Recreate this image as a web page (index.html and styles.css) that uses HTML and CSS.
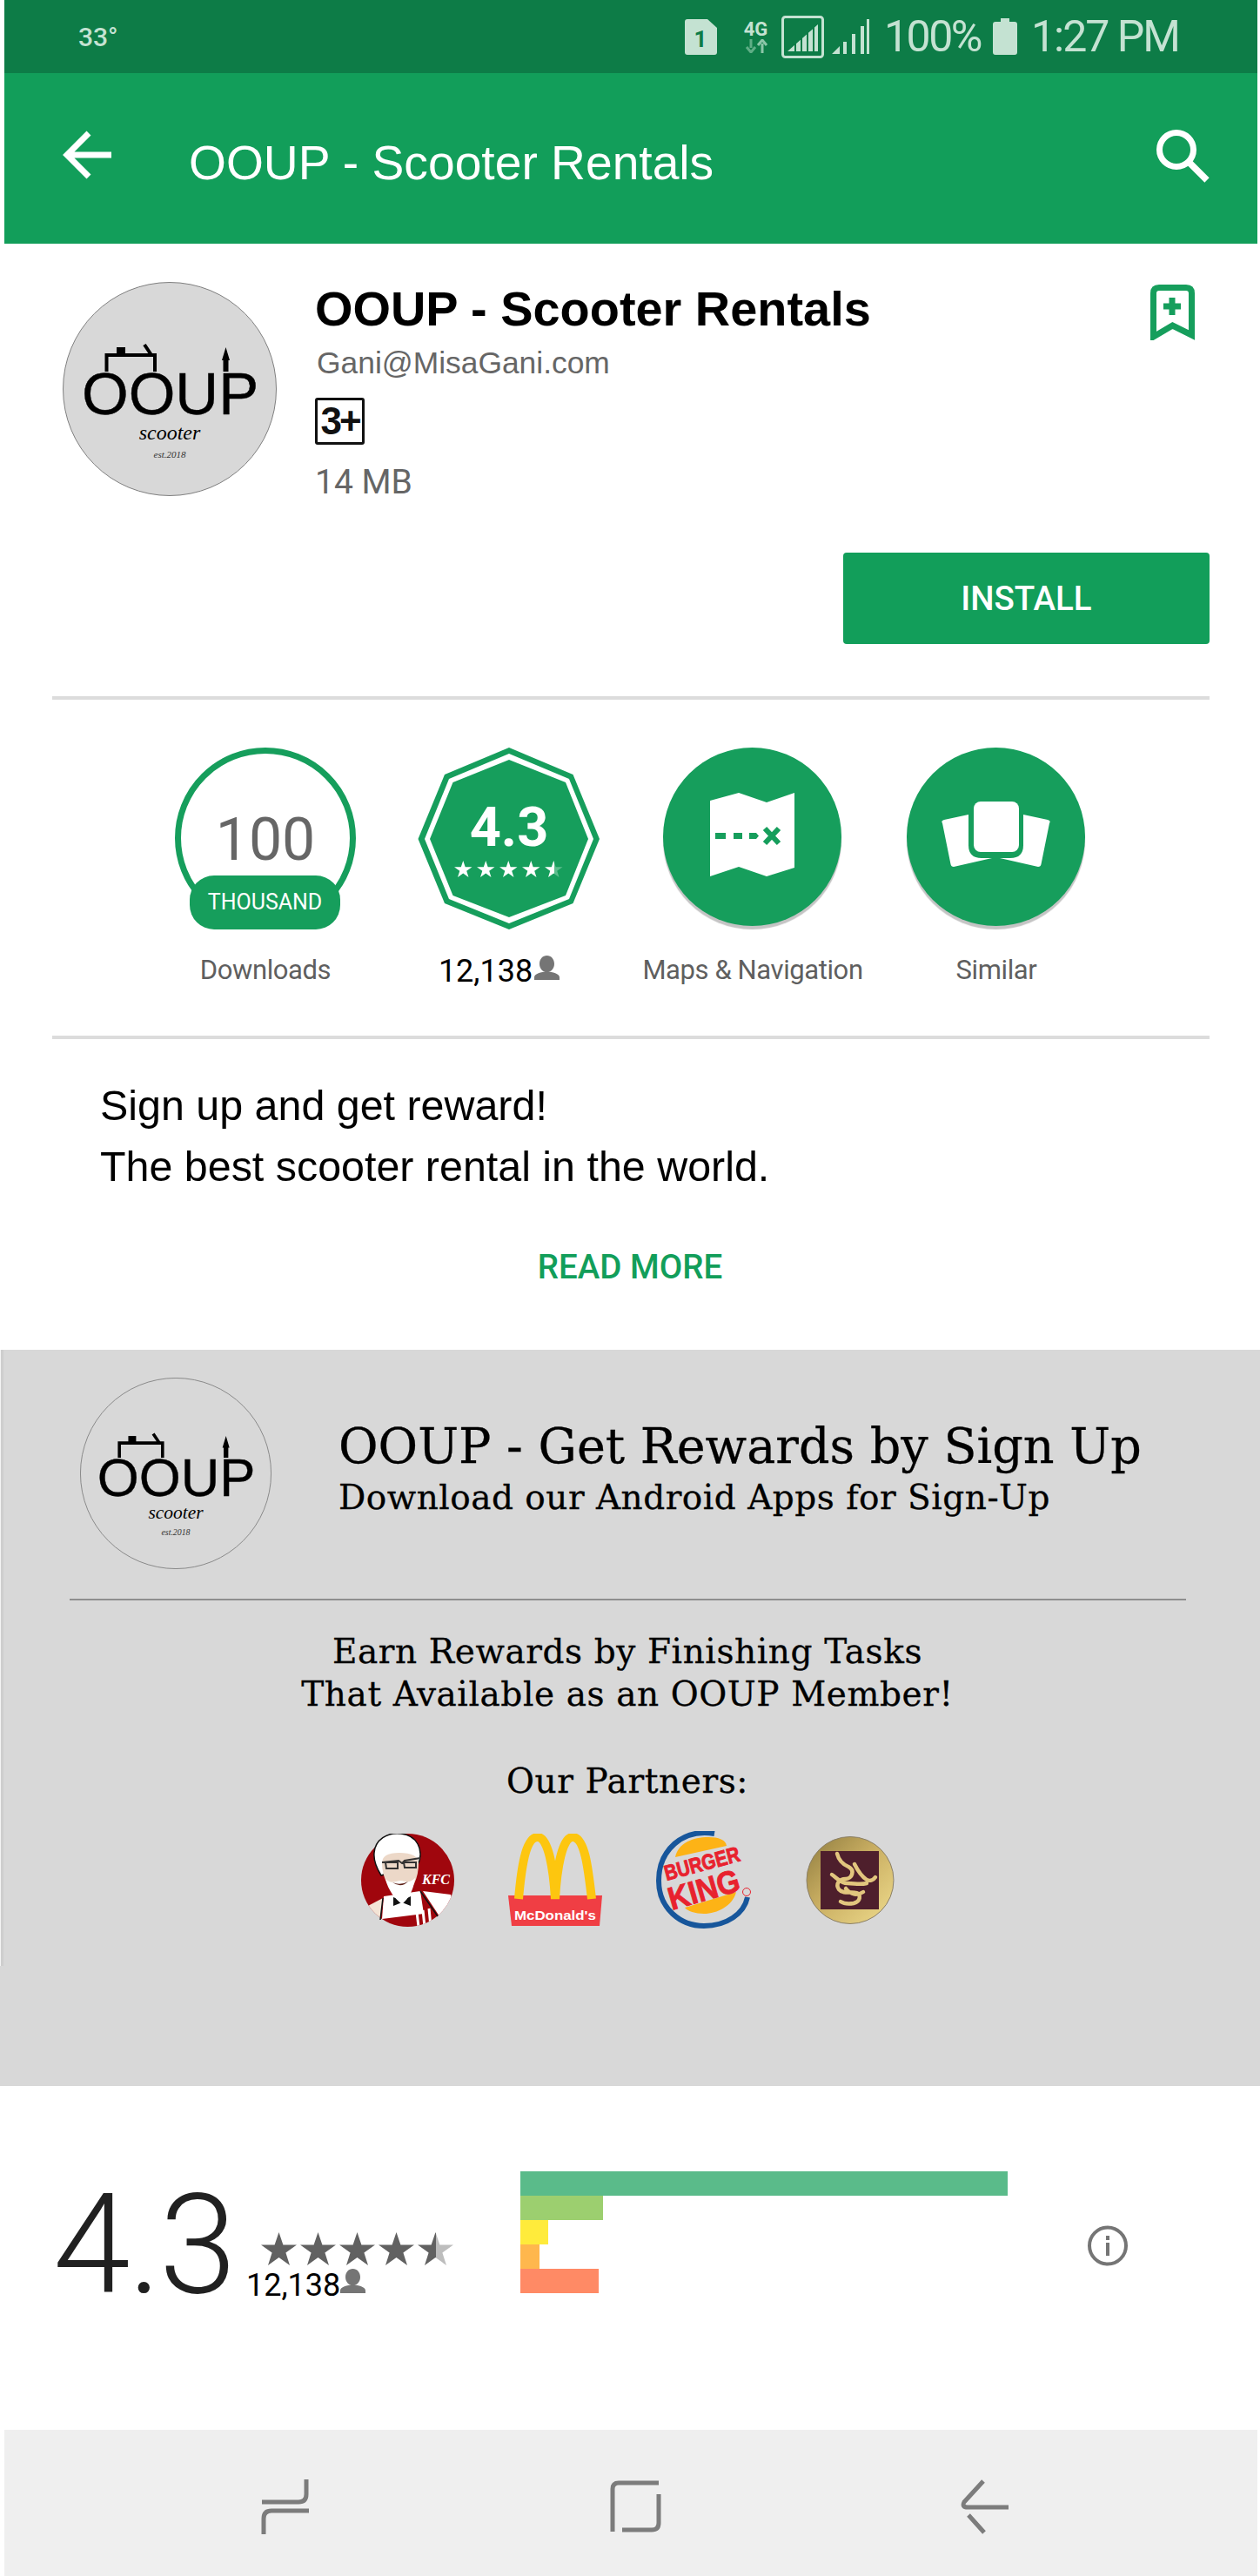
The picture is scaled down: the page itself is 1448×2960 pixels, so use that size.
FILE: index.html
```html
<!DOCTYPE html>
<html lang="en">
<head>
<meta charset="utf-8">
<title>OOUP - Scooter Rentals</title>
<link rel="stylesheet" href="styles.css">
</head>
<body>
<svg class="defs" width="0" height="0" aria-hidden="true">
  <defs>
    <polygon id="star" points="20.5,0 25.4,14.5 41,14.5 28.4,23.5 33,38 20.5,29 8,38 12.6,23.5 0,14.5 15.6,14.5"/>
    <path id="person" d="M14.5 0c5 0 8.5 4.2 8.5 9.5S19.5 19 14.5 19 6 14.800 6 9.500 9.500 0 14.500 0zM0 28v-3c0-4 8-6.500 14.500-6.500S29 21 29 25v3z"/>
    <linearGradient id="halfDark"><stop offset="50%" stop-color="#616161"/><stop offset="50%" stop-color="#bdbdbd"/></linearGradient>
    <linearGradient id="halfWhite"><stop offset="55%" stop-color="#fff"/><stop offset="55%" stop-color="#5cbd8d"/></linearGradient>
    <linearGradient id="gold" x1="0" y1="0" x2="1" y2="1"><stop offset="0" stop-color="#8f7c3f"/><stop offset=".45" stop-color="#c9ae62"/><stop offset="1" stop-color="#efdc8d"/></linearGradient>
    <symbol id="ooup" viewBox="0 0 246 246">
      <circle cx="123" cy="123" r="122.500" fill="#d8d8d8" stroke="#808080" stroke-width="1"/>
      <text class="logo-word" x="22" y="152">OOUP</text>
      <path d="M50.500 103V84H106V103M94 72l8 12" fill="none" stroke="#000" stroke-width="4"/>
      <rect x="62" y="75" width="10" height="9"/>
      <path d="M184.500 103V90H183L187.500 75 192 90H190.500V103z"/>
      <text class="logo-script" x="123" y="181">scooter</text>
      <text class="logo-est" x="123" y="202">est.2018</text>
    </symbol>
  </defs>
</svg>

<header class="status">
  <span class="temp">33°</span>
  <div class="status-right">
    <svg class="st-sim" width="37" height="41" viewBox="0 0 37 41"><path d="M3 0H26L37 10V38q0 3-3 3H3q-3 0-3-3V3q0-3 3-3z" fill="#c4e2d2"/><text class="sim-num" x="18" y="32">1</text></svg>
    <div class="st-net"><span class="net-label">4G</span><svg width="28" height="16" viewBox="0 0 28 16"><path d="M8 0v10M3 9l5 6 5-6" fill="none" stroke="#5fae86" stroke-width="3"/><path d="M21 16V5M16 7l5-6 5 6" fill="none" stroke="#8cc6a8" stroke-width="3"/></svg></div>
    <svg class="st-box" width="49" height="49" viewBox="0 0 49 49"><rect x="1.500" y="1.500" width="46" height="46" rx="3" fill="none" stroke="#c4e2d2" stroke-width="3"/><path d="M7 41L42 10V41zM12 41V36M0 0" fill="#c4e2d2"/><path d="M16 41V26M23 41V20M30 41V14M37 41V8" stroke="#0d7c47" stroke-width="2" fill="none"/></svg>
    <svg class="st-sig" width="43" height="40" viewBox="0 0 43 40"><path d="M0 40L9 31V40zM13 40V26H17V40zM23 40V17H27V40zM33 40V8H37V40zM40 40V0H43V40z" fill="#c4e2d2"/></svg>
    <span class="st-pct">100%</span>
    <svg class="st-bat" width="28" height="42" viewBox="0 0 28 42"><path d="M9 0h10v4h6q3 0 3 3v32q0 3-3 3H3q-3 0-3-3V7q0-3 3-3h6z" fill="#c4e2d2"/></svg>
    <span class="st-time">1:27 PM</span>
  </div>
</header>

<div class="appbar">
  <svg class="ab-back" width="58" height="56" viewBox="0 0 58 56"><path d="M56 28H6M30 3L5 28l25 25" fill="none" stroke="#fff" stroke-width="7"/></svg>
  <span class="ab-title">OOUP - Scooter Rentals</span>
  <svg class="ab-search" width="62" height="62" viewBox="0 0 62 62"><circle cx="24" cy="24" r="19.500" fill="none" stroke="#fff" stroke-width="7"/><path d="M38 38l21 21" stroke="#fff" stroke-width="7.500" fill="none"/></svg>
</div>

<section class="app-head">
  <div class="app-top">
    <svg class="app-logo" width="246" height="246"><use href="#ooup"/></svg>
    <div class="app-info">
      <h1 class="app-title">OOUP - Scooter Rentals</h1>
      <div class="app-email">Gani@MisaGani.com</div>
      <div class="app-badge">3+</div>
      <div class="app-size">14 MB</div>
    </div>
    <svg class="app-bookmark" width="51" height="64" viewBox="0 0 51 64"><path d="M3.500 60V10q0-6.500 6.500-6.500h31q6.500 0 6.500 6.500V58L25.500 47z" fill="none" stroke="#169e5c" stroke-width="7"/><path d="M25 15v20M15 25h20" stroke="#169e5c" stroke-width="7" fill="none"/></svg>
  </div>
  <div class="install-row"><button class="install">INSTALL</button></div>
</section>

<hr class="divider">

<section class="stats">
  <div class="stat">
    <div class="stat-visual">
      <div class="dl-ring"><span class="dl-num">100</span></div>
      <div class="dl-pill">THOUSAND</div>
    </div>
    <div class="stat-label">Downloads</div>
  </div>
  <div class="stat">
    <div class="stat-visual">
      <svg class="octagon" width="210" height="209" viewBox="0 0 210 209">
        <polygon points="105,0 178.500,31 209,105 178.500,179 105,209 31,179 .500,105 31,31" fill="#169e5c"/>
        <polygon points="105,7 174,36 202,105 174,174 105,202 36,174 8,105 36,36" fill="#fff"/>
        <polygon points="105,14 170,40 196,105 170,170 105,195 40.500,170 14,105 40.500,40" fill="#169e5c"/>
        <text class="oct-num" x="105" y="113">4.3</text>
        <g fill="#fff"><use href="#star" transform="translate(42 130) scale(.5)"/><use href="#star" transform="translate(68 130) scale(.5)"/><use href="#star" transform="translate(94 130) scale(.5)"/><use href="#star" transform="translate(120 130) scale(.5)"/><use href="#star" transform="translate(146 130) scale(.5)" fill="url(#halfWhite)"/></g>
      </svg>
    </div>
    <div class="stat-count"><span>12,138</span><svg width="29" height="28" viewBox="0 0 29 28"><use href="#person" fill="#757575"/></svg></div>
  </div>
  <div class="stat">
    <div class="stat-visual">
      <svg class="cat-icon" width="205" height="205" viewBox="0 0 205 205">
        <path d="M54 61L87 52 119 63 151 52V138L119 148 87 137 54 148z" fill="#fff"/>
        <path d="M60 98h12v7H60zM81 98h10v7H81zM99 98h8l3 3.500-3 3.500h-8z" fill="#169e5c"/>
        <path d="M117 93l16 17M133 93l-16 17" stroke="#169e5c" stroke-width="6" fill="none"/>
      </svg>
    </div>
    <div class="stat-label">Maps &amp; Navigation</div>
  </div>
  <div class="stat">
    <div class="stat-visual">
      <svg class="cat-icon" width="205" height="205" viewBox="0 0 205 205">
        <rect x="77" y="62" width="52" height="58" rx="8" fill="#fff"/>
        <path d="M41 87q-2-3 2-4L71 77V112q0 15 15 15h12L54 137q-3 0-3.500-3z" fill="#fff"/>
        <path d="M164 87q2-3-2-4L134 77V112q0 15-15 15h-12l44 10q3 0 3.500-3z" fill="#fff"/>
      </svg>
    </div>
    <div class="stat-label">Similar</div>
  </div>
</section>

<hr class="divider">

<section class="desc">
  <p class="desc-text">Sign up and get reward!<br>The best scooter rental in the world.</p>
  <div class="read-more">READ MORE</div>
</section>

<section class="banner">
  <div class="banner-top">
    <svg class="banner-logo" width="220" height="220"><use href="#ooup"/></svg>
    <div class="banner-head">
      <div class="banner-title">OOUP - Get Rewards by Sign Up</div>
      <div class="banner-sub">Download our Android Apps for Sign-Up</div>
    </div>
  </div>
  <hr class="banner-rule">
  <p class="banner-copy">Earn Rewards by Finishing Tasks<br>That Available as an OOUP Member!</p>
  <p class="banner-partners">Our Partners:</p>
  <div class="partners">
    <svg class="p-kfc" width="107" height="107" viewBox="0 0 107 107">
      <clipPath id="kfcClip"><circle cx="53.500" cy="53.500" r="53.500"/></clipPath>
      <circle cx="53.500" cy="53.500" r="53.500" fill="#a0060d"/>
      <g clip-path="url(#kfcClip)">
        <path d="M71 66L103 70 107 82 90 95z" fill="#fff"/>
        <path d="M6 84L25 74 22 98 10 95z" fill="#f3e4d6"/>
        <path d="M26 72L68 66 72 92 24 98z" fill="#fff"/>
        <path d="M64 90l2 17M71 88l2 19M78 86l2 21" stroke="#fff" stroke-width="3" fill="none"/>
      </g>
      <path d="M25 74L22 99M68 66L88 95" stroke="#111" stroke-width="1.500" fill="none"/>
      <path d="M37 73l10 4 10-5v11l-10-4-10 4z" fill="#111"/>
      <path d="M46 0C30-2 16 7 15 22c-1 10 3 18 8 26L66 34C72 18 64 2 46 0z" fill="#fff" stroke="#111" stroke-width="1.500"/>
      <path d="M24 34C24 26 30 22 44 22S66 26 66 34C66 50 60 66 46 74 32 66 24 50 24 34z" fill="#ecd8c8"/>
      <path d="M28 52c6 6 10 3 17 2 7 1 11 3 17-3-2 15-8 24-15 30-8-6-16-16-19-29z" fill="#fff"/>
      <path d="M24 33l19-2 4 3 3-3 18-3M28 33h14v7H29zM49 33h14v6H50z" fill="none" stroke="#333" stroke-width="2"/>
      <path d="M36 56q9 4 18-1-8 8-18 1z" fill="#5c1f15"/>
      <text class="kfc-text" x="70" y="58">KFC</text>
    </svg>
    <svg class="p-mcd" width="108" height="106" viewBox="0 0 108 106">
      <path d="M0 71H108L105 106H4z" fill="#f03e44"/>
      <path d="M12 75C15 40 20 4 34 4 46 4 52 40 54 75 56 40 62 4 74 4 88 4 92 40 96 75" fill="none" stroke="#fdc60f" stroke-width="10"/>
      <text class="mcd-text" x="7" y="99" textLength="94" lengthAdjust="spacingAndGlyphs">McDonald's</text>
    </svg>
    <svg class="p-bk" width="110" height="112" viewBox="0 0 110 112">
      <path d="M67 3C30-3 3 22 3 57c0 32 25 52 52 52 26 0 46-14 50-33" fill="none" stroke="#17569b" stroke-width="6"/>
      <path d="M22 30C25 14 42 7 60 7c12 0 20 3 21 10z" fill="#fdb316"/>
      <path d="M33 88L92 70C88 86 70 95 55 95c-10 0-19-3-22-7z" fill="#fdb316"/>
      <g class="bk-text"><text transform="translate(12 57) rotate(-15) scale(1 1.2)">BURGER</text><text class="bk-king" transform="translate(18 91) rotate(-16) scale(1 1.1)">KING</text></g>
      <circle cx="104" cy="70" r="4.500" fill="none" stroke="#e8222e"/>
    </svg>
    <svg class="p-gold" width="102" height="101" viewBox="0 0 102 101">
      <circle cx="51" cy="50.500" r="50" fill="url(#gold)" stroke="#8b8068" stroke-width="1"/>
      <rect x="17" y="17" width="67" height="67" fill="#4e1f2c"/>
      <path d="M36 20c2 8 6 12 13 15 8 4 4 14-3 14-8 0-12 6-8 12 5 6 15 2 20 4 6 2 5 10-3 12-6 1-12 0-15-2M56 32c4 8 8 14 14 18 4 2 8 0 10-3M30 44c6 4 10 10 18 10 8 0 14 2 22 0M46 60c6 8 14 8 20 4" fill="none" stroke="#e2c67e" stroke-width="4.500" stroke-linecap="round"/>
    </svg>
  </div>
</section>

<section class="rating">
  <div class="rating-left">
    <div class="rating-num">4.3</div>
    <div class="rating-meta">
      <svg class="rating-stars" width="224" height="38" viewBox="0 0 224 38"><g fill="#616161"><use href="#star"/><use href="#star" x="45"/><use href="#star" x="90"/><use href="#star" x="135"/><use href="#star" x="180" fill="url(#halfDark)"/></g></svg>
      <div class="rating-count"><span>12,138</span><svg width="29" height="28" viewBox="0 0 29 28"><use href="#person" fill="#757575"/></svg></div>
    </div>
  </div>
  <div class="bars">
    <div class="bar bar-5" style="width:560px"></div>
    <div class="bar bar-4" style="width:95px"></div>
    <div class="bar bar-3" style="width:32px"></div>
    <div class="bar bar-2" style="width:22px"></div>
    <div class="bar bar-1" style="width:90px"></div>
  </div>
  <svg class="info" width="46" height="47" viewBox="0 0 46 47"><circle cx="23" cy="23.500" r="21" fill="none" stroke="#757575" stroke-width="4"/><path d="M21 12h4v5h-4zM21 20h4v15h-4z" fill="#757575"/></svg>
</section>

<nav class="navbar">
  <svg width="60" height="70" viewBox="0 0 60 70"><path d="M54 3V20Q54 29 45 29H3M5 66V48Q5 39 14 39H57" fill="none" stroke="#7c7c7c" stroke-width="5"/></svg>
  <svg width="60" height="70" viewBox="0 0 60 70"><path d="M4 63V14Q4 7 11 7H57M57 20V53Q57 61 49 61H15" fill="none" stroke="#7c7c7c" stroke-width="5"/></svg>
  <svg width="60" height="70" viewBox="0 0 60 70"><path d="M28 5L6 29Q3 35 10 35H57M11 44L29 64" fill="none" stroke="#7c7c7c" stroke-width="5"/></svg>
</nav>
</body>
</html>
```

FILE: styles.css
```css
* { box-sizing: border-box; }
html, body { margin: 0; padding: 0; }
body {
  width: 1448px;
  height: 2960px;
  background: #fff;
  display: flex;
  flex-direction: column;
  font-family: "Liberation Sans", Arial, sans-serif;
  overflow: hidden;
}
.defs { position: absolute; }
svg { display: block; flex: none; }

/* Status bar */
.status {
  height: 84px;
  margin: 0 3px 0 5px;
  padding: 0 92px 0 85px;
  background: #0d7c47;
  color: #c4e2d2;
  display: flex;
  align-items: center;
  font-family: Roboto, sans-serif;
}
.temp { font-size: 30px; font-weight: 500; }
.status-right { margin-left: auto; display: flex; align-items: center; }
.sim-num { font: 700 26px Roboto, sans-serif; fill: #0d7c47; text-anchor: middle; }
.st-net { margin-left: 27px; width: 35px; display: flex; flex-direction: column; align-items: center; }
.net-label { font-size: 22px; font-weight: 700; line-height: 22px; }
.st-box { margin-left: 12px; }
.st-sig { margin-left: 9px; }
.st-pct { margin-left: 17px; font-size: 50px; line-height: 60px; width: 109px; letter-spacing: -2.5px; white-space: nowrap; }
.st-bat { margin-left: 16px; }
.st-time { margin-left: 16px; font-size: 50px; line-height: 60px; width: 168px; white-space: nowrap; letter-spacing: -2px; }

/* App bar */
.appbar {
  height: 196px;
  margin: 0 3px 0 5px;
  padding: 0 55px 0 67px;
  background: #129e5a;
  display: flex;
  align-items: center;
  color: #fff;
}
.ab-back { margin-top: -8px; }
.ab-title { margin-left: 87px; font-size: 55.200px; margin-top: 10px; white-space: nowrap; }
.ab-search { margin-left: auto; margin-top: -6px; }

/* App header */
.app-head { padding: 44px 58px 0 72px; }
.app-top { display: flex; align-items: flex-start; }
.app-info { margin-left: 44px; flex: 1; }
.app-title { margin: 0; font-size: 55.900px; line-height: 62px; font-weight: 700; color: #000; }
.app-email { margin-top: 11px; font-size: 35.400px; line-height: 40px; color: #666; padding-left: 2px; }
.app-badge {
  margin-top: 20px;
  width: 57px;
  height: 54px;
  border: 3px solid #111;
  border-radius: 3px;
  font-weight: 700;
  font-size: 44px;
  line-height: 48px;
  text-align: center;
  color: #111;
  letter-spacing: -3px;
}
.app-size { margin-top: 21px; font-family: Roboto, sans-serif; font-size: 39px; line-height: 44px; color: #666; }
.app-bookmark { margin: 3px 17px 0 0; }
.install-row { display: flex; justify-content: flex-end; margin-top: 59px; }
.install {
  width: 421px;
  height: 105px;
  border: 0;
  border-radius: 4px;
  background: #129e5a;
  color: #fff;
  font: 500 38.500px Roboto, sans-serif;
}

.divider { margin: 60px 58px 0 60px; height: 4px; border: 0; background: #dcdcdc; }

/* Stats */
.stats { padding: 55px 0 0 165px; display: grid; grid-template-columns: repeat(4, 280px); }
.stat { display: flex; flex-direction: column; align-items: center; }
.stat-visual { position: relative; width: 210px; height: 208px; display: flex; justify-content: center; }
.dl-ring {
  width: 208px;
  height: 208px;
  border: 7px solid #169e5c;
  border-radius: 50%;
  display: flex;
  justify-content: center;
  padding-top: 59px;
}
.dl-num { font: 400 68px/80px Roboto, sans-serif; color: #666; }
.dl-pill {
  position: absolute;
  left: 18px;
  top: 147px;
  width: 173px;
  height: 62px;
  border-radius: 28px;
  background: #169e5c;
  color: #fff;
  font: 400 25px/62px Roboto, sans-serif;
  text-align: center;
}
.oct-num { font: 700 63px Roboto, sans-serif; fill: #fff; text-anchor: middle; }
.cat-icon { background: #169e5c; border-radius: 50%; box-shadow: 0 4px 1px #c4c4c4; margin-left: -2px; }
.stat-label { margin-top: 28px; font: 400 31px/40px Roboto, sans-serif; color: #5f5f5f; white-space: nowrap; letter-spacing: -.4px; }
.stat-count { margin-top: 28px; padding-right: 23px; height: 40px; display: flex; align-items: flex-start; font: 400 36px/42px Roboto, sans-serif; color: #000; }
.stat-count svg { margin: 3px 0 0 2px; }
.stats + .divider { margin-top: 55px; }

/* Description */
.desc { padding: 41px 0 0; }
.desc-text { margin: 0 0 0 115px; font-size: 48.400px; line-height: 70px; color: #000; }
.read-more { margin-top: 56px; text-align: center; font: 500 38.500px/50px Roboto, sans-serif; color: #129e5a; }

/* Banner */
.banner {
  position: relative;
  margin-top: 70px;
  height: 846px;
  background: #d8d8d8;
  padding-top: 32px;
  font-family: "DejaVu Serif", serif;
  color: #000;
}
.banner::before {
  content: "";
  position: absolute;
  left: 0;
  top: 0;
  width: 3px;
  height: 708px;
  border-left: 1px solid #f4f4f4;
  background: #cecece;
}
.banner-top { display: flex; padding-left: 92px; }
.banner-head { margin-left: 77px; padding-top: 44px; white-space: nowrap; -webkit-text-stroke: .3px #000; }
.banner-title { font-size: 55.600px; line-height: 70px; }
.banner-sub { font-size: 39px; line-height: 46px; margin-top: 1px; letter-spacing: .5px; }
.banner-rule { margin: 34px 85px 0 80px; height: 2px; border: 0; background: #8e8e8e; }
.banner-copy { margin: 34px 6px 0 0; text-align: center; font-size: 39px; line-height: 49px; letter-spacing: .6px; -webkit-text-stroke: .3px #000; }
.banner-partners { margin: 53px 6px 0 0; text-align: center; font-size: 39px; line-height: 46px; letter-spacing: .6px; -webkit-text-stroke: .3px #000; }
.partners { margin-top: 34px; padding-left: 415px; display: flex; gap: 62px; align-items: center; }
.logo-word { font: 400 69px "Liberation Sans", sans-serif; stroke: #000; stroke-width: .4px; }
.logo-script { font: italic 400 24px "Liberation Serif", serif; text-anchor: middle; }
.logo-est { font: italic 400 11px "Liberation Serif", serif; text-anchor: middle; fill: #333; }
.kfc-text { font: italic 700 16px "Liberation Serif", serif; fill: #fff; }
.mcd-text { font: 700 15px "Liberation Sans", sans-serif; fill: #fff; }
.bk-text text { font: 700 20.500px "Liberation Sans", sans-serif; fill: #e8222e; stroke: #e8222e; stroke-width: .8px; }
.bk-text .bk-king { font-size: 33.600px; }

/* Rating */
.rating { padding: 98px 0 0 60px; display: flex; align-items: flex-start; }
.rating-left { width: 538px; display: flex; height: 140px; }
.rating-num { font: 300 160px/170px Roboto, sans-serif; color: #212121; width: 225px; padding-left: 1px; letter-spacing: -2.500px; white-space: nowrap; }
.rating-meta { padding-top: 70px; }
.rating-stars { margin-left: 15px; }
.rating-count { display: flex; align-items: flex-start; margin: 4px 0 0 -2px; font: 400 36px/38px Roboto, sans-serif; color: #000; }
.bars { width: 560px; display: flex; flex-direction: column; }
.bar { height: 28px; }
.bar-5 { background: #5abb8a; }
.bar-4 { background: #9ccf6f; }
.bar-3 { background: #ffeb3b; }
.bar-2 { background: #ffb74d; }
.bar-1 { background: #ff8a65; }
.info { margin: 62px 0 0 92px; }

/* Nav bar */
.navbar {
  margin: auto 3px 0 5px;
  height: 168px;
  padding: 10px 0 0 293px;
  background: #efefef;
  display: flex;
  align-items: center;
  gap: 342px;
}
```
